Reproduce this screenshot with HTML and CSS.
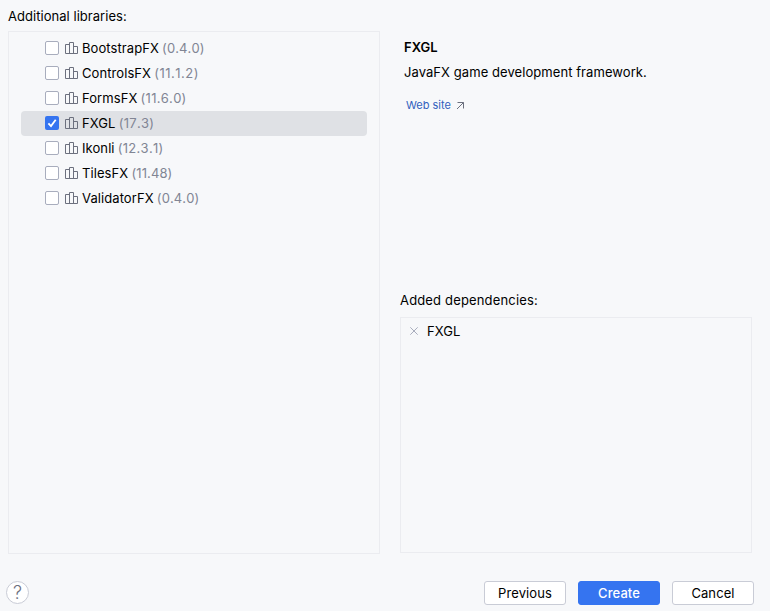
FILE: index.html
```html
<!DOCTYPE html>
<html lang="en">
<head>
<meta charset="utf-8">
<title>New Project</title>
<link rel="stylesheet" href="styles.css">
</head>
<body>
<svg class="defs" aria-hidden="true">
  <symbol id="lib" viewBox="0 0 14 14"><path d="M4.500 3.500h-4v9h12v-7h-4M4.500 12.500v-11h4v11"/></symbol>
</svg>
<main class="dialog">
  <section class="libraries">
    <h2 class="label">Additional libraries:</h2>
    <ul class="list">
      <li class="row"><span class="check"></span><svg class="icon"><use href="#lib"/></svg><span class="name">BootstrapFX</span><span class="version">(0.4.0)</span></li>
      <li class="row"><span class="check"></span><svg class="icon"><use href="#lib"/></svg><span class="name">ControlsFX</span><span class="version narrow-digits">(11.1.2)</span></li>
      <li class="row"><span class="check"></span><svg class="icon"><use href="#lib"/></svg><span class="name">FormsFX</span><span class="version mixed-digits">(11.6.0)</span></li>
      <li class="row selected"><span class="check checked"><svg viewBox="0 0 14 14"><path d="M3.400 7.300l2.600 2.800 4.700-6.300"/></svg></span><svg class="icon"><use href="#lib"/></svg><span class="name">FXGL</span><span class="version mixed-digits">(17.3)</span></li>
      <li class="row"><span class="check"></span><svg class="icon"><use href="#lib"/></svg><span class="name">Ikonli</span><span class="version mixed-digits">(12.3.1)</span></li>
      <li class="row"><span class="check"></span><svg class="icon"><use href="#lib"/></svg><span class="name">TilesFX</span><span class="version">(11.48)</span></li>
      <li class="row"><span class="check"></span><svg class="icon"><use href="#lib"/></svg><span class="name">ValidatorFX</span><span class="version">(0.4.0)</span></li>
    </ul>
  </section>
  <section class="side">
    <div class="details">
      <h1 class="title">FXGL</h1>
      <p class="description">JavaFX game development framework.</p>
      <a class="link"><span>Web site</span><svg viewBox="0 0 9 9"><path d="M1 8l6.500-6.500M1.500 1.500h6v6"/></svg></a>
    </div>
    <h2 class="label">Added dependencies:</h2>
    <div class="dependencies">
      <div class="dependency"><svg viewBox="0 0 8 8"><path d="M.3.3l7.400 7.400M7.700.3L.3 7.700"/></svg><span>FXGL</span></div>
    </div>
  </section>
</main>
<footer class="footer">
  <button class="help">?</button>
  <div class="actions">
    <button class="button">Previous</button>
    <button class="button primary">Create</button>
    <button class="button">Cancel</button>
  </div>
</footer>
</body>
</html>
```
FILE: styles.css
```css
* { box-sizing: border-box; }
body {
  margin: 0;
  width: 770px;
  height: 611px;
  overflow: hidden;
  background: #f7f8fa;
  color: #000;
  font: 13px/16px Inter, sans-serif;
  display: flex;
  flex-direction: column;
}
h1, h2, p, ul { margin: 0; padding: 0; }
.defs { display: none; }
.dialog {
  height: 554px;
  padding: 0 18px 0 8px;
  display: grid;
  grid-template-columns: 372px 352px;
  gap: 20px;
}
.libraries, .side { display: flex; flex-direction: column; }
.label { font-size: 13px; font-weight: 400; }
.libraries .label { height: 31px; padding-top: 8px; letter-spacing: 0.04px; }
.list {
  flex: 1;
  list-style: none;
  border: 1px solid #ebecf0;
  padding: 4px 12px;
}
.row {
  display: flex;
  align-items: center;
  height: 25px;
  padding: 0 0 1px 24px;
  border-radius: 4px;
}
.selected { background: #dfe1e5; }
.check {
  width: 14px;
  height: 14px;
  border: 1px solid #a8adbd;
  border-radius: 2px;
  background: #fff;
}
.checked { border: 0; background: #3574f0; }
.check svg { display: block; width: 14px; height: 14px; fill: none; stroke: #fff; stroke-width: 1.8; }
.icon { width: 14px; height: 14px; margin: 0 3px 0 6px; fill: none; stroke: #6c707e; }
.name { letter-spacing: 0.08px; }
.version { margin-left: 3.2px; color: #818594; font-kerning: none; letter-spacing: 0.1px; }
.mixed-digits { letter-spacing: 0.28px; }
.narrow-digits { letter-spacing: 0.5px; }
.side { padding-bottom: 1px; }
.details { height: 292px; padding: 39px 0 0 4px; }
.title { font-size: 13px; font-weight: 600; line-height: 16px; }
.description { margin-top: 9px; letter-spacing: 0.07px; }
.link {
  display: flex;
  align-items: center;
  gap: 5px;
  margin: 17px 0 0 2px;
  color: #315fbd;
  font-size: 11px;
}
.link svg { width: 9px; height: 9px; fill: none; stroke: #6c707e; }
.side .label { height: 25px; letter-spacing: 0.16px; }
.dependencies { flex: 1; border: 1px solid #ebecf0; padding: 5px 9px; }
.dependency { display: flex; align-items: center; gap: 9px; letter-spacing: 0.1px; }
.dependency svg { width: 8px; height: 8px; fill: none; stroke: #a8adbd; }
.footer { display: flex; justify-content: space-between; padding: 27px 16px 0 6px; }
.help {
  width: 23px;
  height: 23px;
  padding: 0;
  border: 1px solid #c9ccd6;
  border-radius: 50%;
  background: #fff;
  color: #6c707e;
  font: 300 18px/21px Inter, sans-serif;
}
.actions { display: flex; gap: 12px; }
.button {
  width: 82px;
  height: 24px;
  padding: 0;
  border: 1px solid #c9ccd6;
  border-radius: 3px;
  background: #fff;
  color: #000;
  font: 13px/22px Inter, sans-serif;
  letter-spacing: 0.1px;
}
.primary { border-color: #3574f0; background: #3574f0; color: #fff; font-weight: 500; }
```
